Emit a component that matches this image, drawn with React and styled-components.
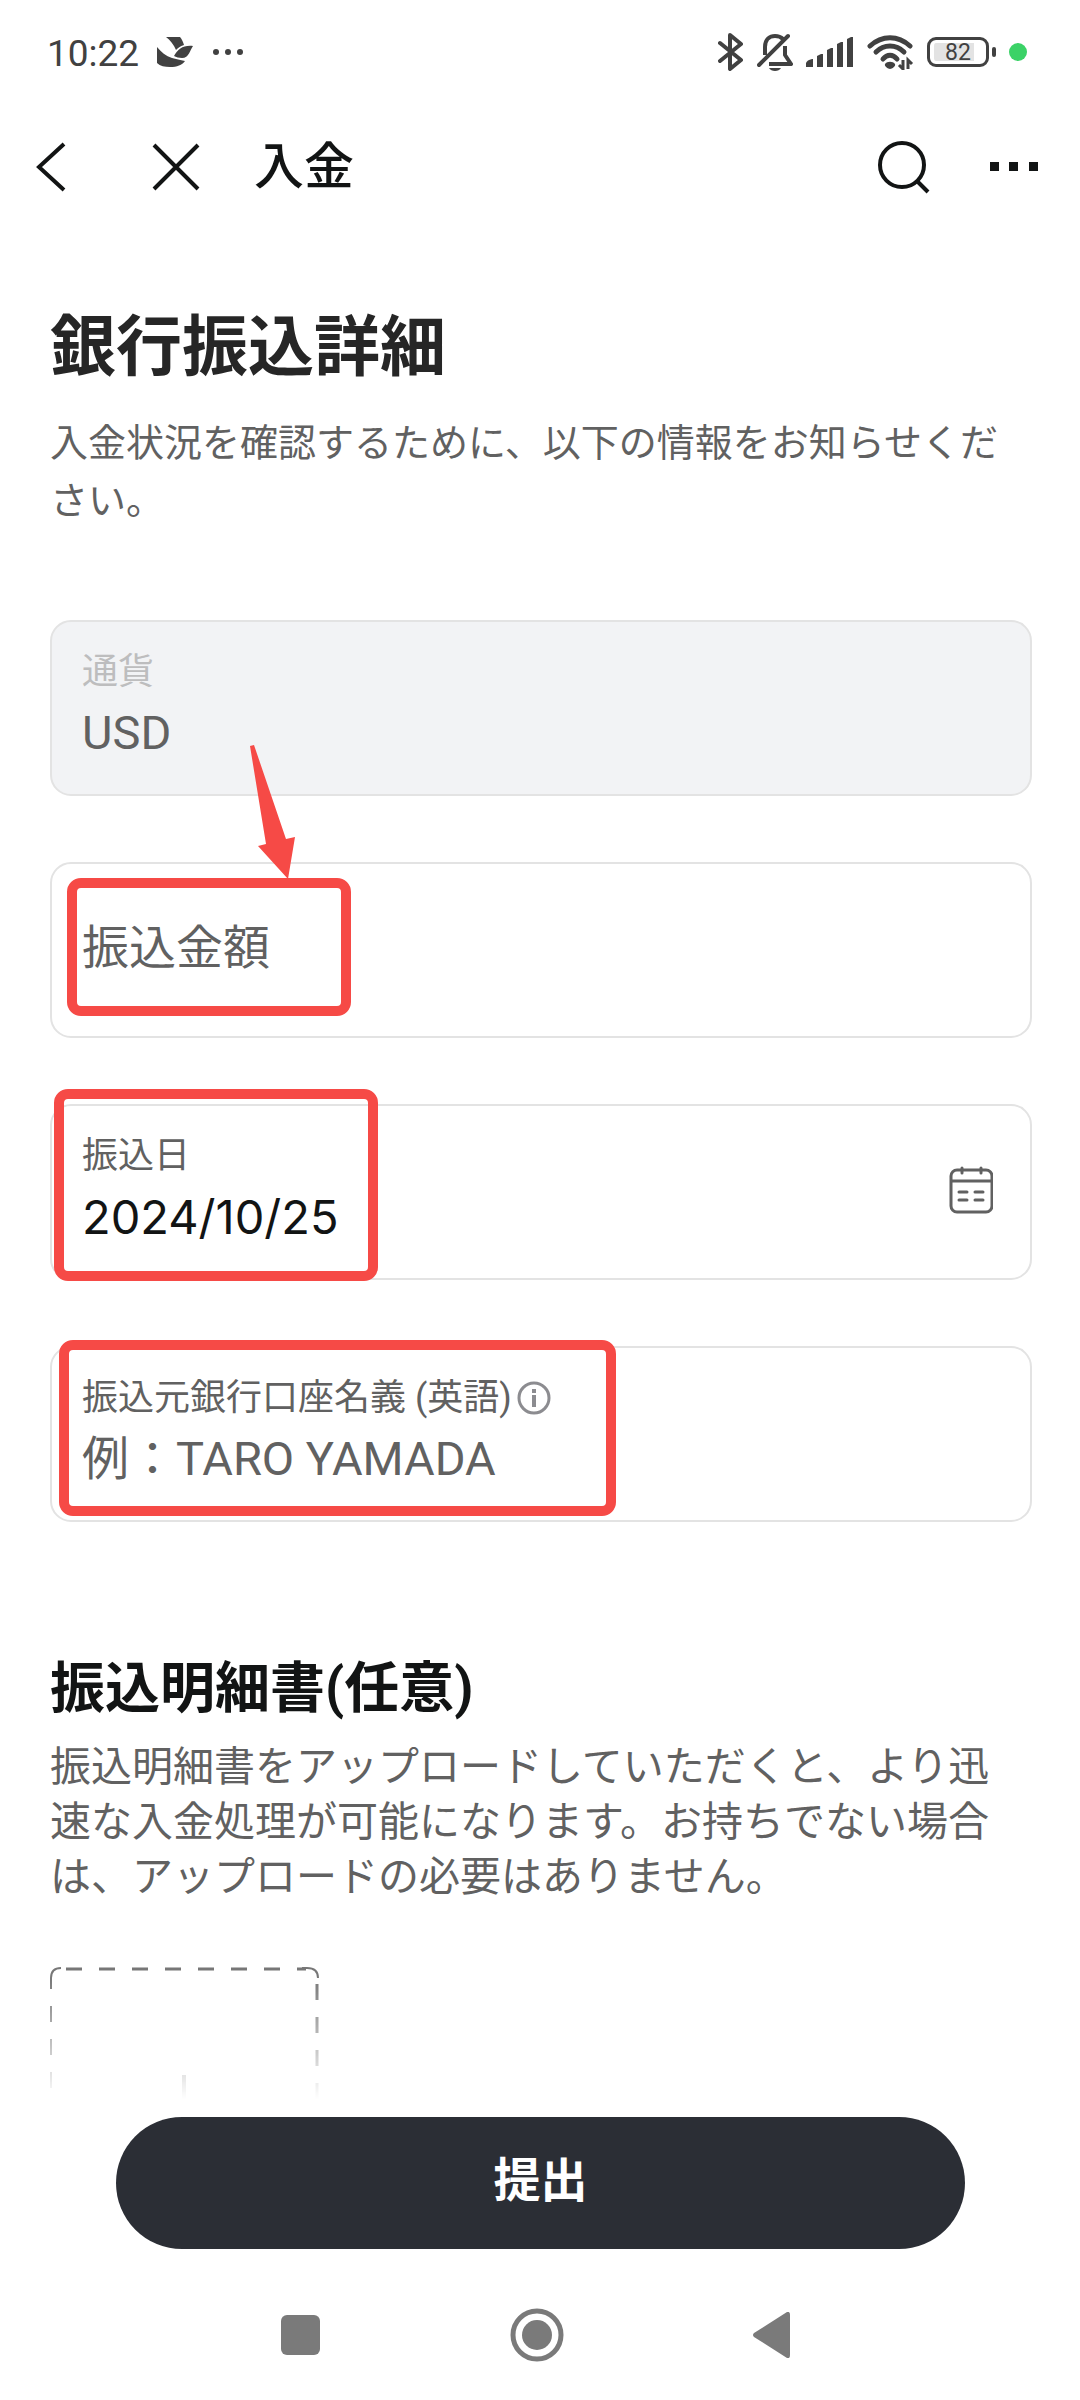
import React, { useState } from 'react';
import styled, { createGlobalStyle } from 'styled-components';

const GlobalStyle = createGlobalStyle`
    * {
        box-sizing: border-box;
    }
    body {
        margin: 0;
        background: #ffffff;
        color: #121414;
        font-family: Roboto, 'Noto Sans CJK JP', sans-serif;
    }
    svg {
        display: block;
        flex: none;
    }
    button {
        border: 0;
        padding: 0;
        background: none;
        color: inherit;
        font: inherit;
        cursor: pointer;
    }
`;

const Page = styled.div`
    display: flex;
    flex-direction: column;
    min-height: 100vh;
    background: #ffffff;
`;

const StatusBar = styled.div`
    display: flex;
    align-items: center;
    justify-content: space-between;
    height: 104px;
    padding: 0 53px 0 47px;
    color: #414141;
    font-size: 37px;
`;

const StatusGroup = styled.div`
    display: flex;
    align-items: center;
    gap: ${props => props.$gap}px;
`;

const Time = styled.span`
    padding-top: 2px;
`;

const Battery = styled.div`
    display: flex;
    align-items: center;
    gap: 3px;
    &::after {
        content: '';
        width: 4px;
        height: 10px;
        border-radius: 2px;
        background: #414141;
    }
`;

const BatteryCell = styled.div`
    width: 62px;
    height: 30px;
    padding: 3px 4px;
    border: 3px solid #414141;
    border-radius: 9px;
    font-size: 23px;
    line-height: 20px;
    text-align: center;
    background: linear-gradient(90deg, #e3e3e3 40px, #ffffff 40px) content-box
        no-repeat;
`;

const ActiveDot = styled.span`
    width: 18px;
    height: 18px;
    border-radius: 50%;
    background: #3bd267;
`;

const AppBar = styled.header`
    display: flex;
    align-items: center;
    height: 126px;
    padding: 0 42px 0 36px;
`;

const IconButton = styled.button`
    display: flex;
    align-items: center;
    justify-content: center;
    margin-right: ${props => props.$space || 0}px;
`;

const AppTitle = styled.h1`
    flex: 1;
    margin: 0;
    font-size: 50px;
    font-weight: 500;
    line-height: 64px;
`;

const Content = styled.main`
    flex: 1;
    padding: 74px 48px 0 50px;
`;

const Title = styled.h2`
    margin: 0 0 22px;
    color: #262626;
    font-size: 66px;
    font-weight: 700;
    line-height: 88px;
`;

const Lead = styled.p`
    margin: 0 0 90px;
    color: #616161;
    font-size: 38px;
    line-height: 58px;
`;

const Fields = styled.div`
    display: flex;
    flex-direction: column;
    gap: 66px;
    margin-bottom: 128px;
`;

const Field = styled.div`
    position: relative;
    display: flex;
    align-items: center;
    height: 176px;
    padding: 0 37px 4px 30px;
    border: 2px solid #e3e3e3;
    border-radius: 21px;
    background: ${props => (props.$disabled ? '#f2f3f5' : '#ffffff')};
`;

const FieldBody = styled.div`
    flex: 1;
    display: flex;
    flex-direction: column;
    gap: 8px;
    min-width: 0;
`;

const Label = styled.label`
    display: flex;
    align-items: center;
    gap: 5px;
    color: ${props => (props.$disabled ? '#bdbdbe' : '#616161')};
    font-size: 36px;
    line-height: 46px;
`;

const Input = styled.input`
    width: 100%;
    height: 60px;
    padding: 0;
    border: 0;
    outline: 0;
    background: none;
    color: #121414;
    font-family: ${props => (props.$numeric ? 'Inter' : 'Roboto')},
        'Noto Sans CJK JP', sans-serif;
    font-size: 47px;
    line-height: 60px;
    &:disabled {
        color: #616161;
    }
    &::placeholder {
        color: #616161;
        opacity: 1;
    }
`;

const Highlight = styled.div`
    position: absolute;
    left: ${props => props.$left}px;
    top: ${props => props.$top}px;
    width: ${props => props.$width}px;
    height: ${props => props.$height}px;
    border: 10px solid #f64a46;
    border-radius: 14px;
    pointer-events: none;
`;

const Arrow = styled.svg`
    position: absolute;
    left: 198px;
    top: -119px;
    pointer-events: none;
`;

const SectionTitle = styled.h3`
    margin: 0 0 14px;
    font-size: 55px;
    font-weight: 700;
    line-height: 76px;
`;

const SectionText = styled.p`
    margin: 0 0 62px;
    padding-right: 24px;
    color: #616161;
    font-size: 41px;
    line-height: 55px;
`;

const UploadButton = styled.button`
    display: block;
    mask-image: linear-gradient(#000 10px, transparent 132px);
`;

const Footer = styled.footer`
    padding: 0 115px 0 116px;
`;

const SubmitButton = styled.button`
    width: 100%;
    height: 132px;
    padding-bottom: 14px;
    border-radius: 66px;
    background: #2b2e35;
    color: #ffffff;
    font-size: 47px;
    font-weight: 700;
`;

const NavBar = styled.nav`
    display: flex;
    align-items: center;
    justify-content: center;
    gap: 189px;
    height: 151px;
    padding: 20px 8px 0 0;
    color: #7a7a7a;
`;

const BirdIcon = () => (
    <svg width='37' height='30' viewBox='0 0 37 30' fill='currentColor'>
        <path d='M9 0h14c2 2 3 5 4 8-4 1-6 3-8 5C17 8 13 3 9 0z' />
        <path d='M0 10c4 5 9 9 15 11 4 1 8 2 13 3-3 4-8 6-15 6-5 0-10-1-13-4z' />
        <path d='M17 19c4-7 9-11 19-10-3 4-4 12-11 12-3 0-6-1-8-2z' />
    </svg>
);

const DotsIcon = () => (
    <svg width='32' height='8' viewBox='0 0 32 8' fill='currentColor'>
        <circle cx='4' cy='4' r='3' />
        <circle cx='16' cy='4' r='3' />
        <circle cx='28' cy='4' r='3' />
    </svg>
);

const BluetoothIcon = () => (
    <svg
        width='26'
        height='40'
        viewBox='0 0 26 40'
        fill='none'
        stroke='currentColor'
        strokeWidth='4'
        strokeLinecap='round'
        strokeLinejoin='round'
    >
        <path d='M2 11l21 17-11 9V3l11 9L2 29' />
    </svg>
);

const MutedBellIcon = () => (
    <svg
        width='36'
        height='40'
        viewBox='0 0 36 40'
        fill='none'
        stroke='currentColor'
        strokeWidth='4'
    >
        <path d='M8 23V15C8 7 13 4 18 4c3 0 6 1 8 3' />
        <path d='M28 14v9l6 9H12' strokeLinejoin='round' />
        <path d='M2 33L31 4' strokeLinecap='round' />
        <path d='M12 36h12c-2 4-10 4-12 0z' fill='currentColor' stroke='none' />
    </svg>
);

const SignalIcon = () => (
    <svg width='48' height='32' viewBox='0 0 48 32' fill='currentColor'>
        <path d='M0 31v-4q1-3 6-4h1v8z' />
        <path d='M11 31V20l4-2h2v13z' />
        <path d='M21 31V14l4-2h2v19z' />
        <path d='M31 31V8l4-2h2v25z' />
        <path d='M41 31V3l4-2h2v30z' />
    </svg>
);

const WifiIcon = () => (
    <svg width='47' height='36' viewBox='0 0 47 36' fill='none' stroke='currentColor'>
        <g strokeWidth='5' strokeLinecap='round'>
            <path d='M3 12C15 1 31 1 43 12' />
            <path d='M9 18c8-8 20-8 28 0' />
            <path d='M16 25c4-5 10-5 14 0' />
        </g>
        <path
            d='M18 30c2-3 8-3 10 0 1 2-3 5-5 5s-6-3-5-5z'
            fill='currentColor'
            stroke='none'
        />
        <path d='M36 26v9l-4-4M41 35v-9l4 4' strokeWidth='3' />
    </svg>
);

const BackIcon = () => (
    <svg width='32' height='50' viewBox='0 0 32 50' fill='none' stroke='currentColor' strokeWidth='4'>
        <path d='M28 2L3 25l25 23' />
    </svg>
);

const CloseIcon = () => (
    <svg width='48' height='48' viewBox='0 0 48 48' fill='none' stroke='currentColor' strokeWidth='4'>
        <path d='M2 2l44 44M46 2L2 46' />
    </svg>
);

const SearchIcon = () => (
    <svg width='54' height='54' viewBox='0 0 54 54' fill='none' stroke='currentColor' strokeWidth='4'>
        <circle cx='25' cy='25' r='22' />
        <path d='M40 41l11 11' />
    </svg>
);

const MoreIcon = () => (
    <svg width='48' height='10' viewBox='0 0 48 10' fill='currentColor'>
        <path d='M0 0h9v9H0zM19 0h9v9h-9zM39 0h9v9h-9z' />
    </svg>
);

const InfoIcon = () => (
    <svg width='34' height='34' viewBox='0 0 34 34' fill='none' stroke='#8c8c90' strokeWidth='3'>
        <circle cx='17' cy='17' r='15' />
        <path d='M17 14v12M17 8v4' strokeWidth='4' />
    </svg>
);

const CalendarIcon = () => (
    <svg width='44' height='48' viewBox='0 0 44 48' fill='none' stroke='#616161' strokeWidth='3'>
        <rect x='2' y='4' width='41' height='42' rx='6' />
        <path d='M2 15h41' />
        <path
            d='M13 2v5M32 2v5M10 26h8M26 26h8M10 34h8M26 34h8'
            strokeLinecap='round'
        />
    </svg>
);

const UploadFrame = () => (
    <svg width='270' height='140' viewBox='0 0 270 140' fill='none' stroke='#777777'>
        <path d='M1 22V11Q1 1 11 1' strokeWidth='2' />
        <path d='M16 2h240' strokeWidth='3' strokeDasharray='16 17' />
        <path d='M252 1h5q11 0 11 10' strokeWidth='2' />
        <path d='M1 39v100' strokeWidth='2' strokeDasharray='16 17' />
        <path d='M267 17v122' strokeWidth='3' strokeDasharray='16 17' />
        <path d='M134 108v32' strokeWidth='4' />
    </svg>
);

const App = () => {
    const [amount, setAmount] = useState('');
    const [date, setDate] = useState('2024/10/25');
    const [holder, setHolder] = useState('');

    return (
        <Page>
            <GlobalStyle />
            <StatusBar>
                <StatusGroup $gap={18}>
                    <Time>10:22</Time>
                    <BirdIcon />
                    <DotsIcon />
                </StatusGroup>
                <StatusGroup $gap={13}>
                    <BluetoothIcon />
                    <MutedBellIcon />
                    <SignalIcon />
                    <WifiIcon />
                    <Battery>
                        <BatteryCell>82</BatteryCell>
                    </Battery>
                    <ActiveDot />
                </StatusGroup>
            </StatusBar>

            <AppBar>
                <IconButton $space={84} aria-label='戻る'>
                    <BackIcon />
                </IconButton>
                <IconButton $space={54} aria-label='閉じる'>
                    <CloseIcon />
                </IconButton>
                <AppTitle>入金</AppTitle>
                <IconButton $space={59} aria-label='検索'>
                    <SearchIcon />
                </IconButton>
                <IconButton aria-label='メニュー'>
                    <MoreIcon />
                </IconButton>
            </AppBar>

            <Content>
                <Title>銀行振込詳細</Title>
                <Lead>
                    入金状況を確認するために、以下の情報をお知らせください。
                </Lead>

                <Fields>
                    <Field $disabled>
                        <FieldBody>
                            <Label htmlFor='currency' $disabled>
                                通貨
                            </Label>
                            <Input id='currency' value='USD' disabled readOnly />
                        </FieldBody>
                    </Field>
                    <Field>
                        <FieldBody>
                            <Input
                                aria-label='振込金額'
                                placeholder='振込金額'
                                value={amount}
                                onChange={e => setAmount(e.target.value)}
                            />
                        </FieldBody>
                        <Highlight $left={15} $top={14} $width={284} $height={138} />
                        <Arrow width='46' height='136' viewBox='0 0 46 136'>
                            <path
                                d='M0 1l4-1 32 94 9-2-7 42L8 101l8-2z'
                                fill='#f64a46'
                            />
                        </Arrow>
                    </Field>
                    <Field>
                        <FieldBody>
                            <Label htmlFor='date'>振込日</Label>
                            <Input
                                id='date'
                                $numeric
                                value={date}
                                onChange={e => setDate(e.target.value)}
                            />
                        </FieldBody>
                        <IconButton aria-label='カレンダー'>
                            <CalendarIcon />
                        </IconButton>
                        <Highlight $left={2} $top={-17} $width={324} $height={192} />
                    </Field>
                    <Field>
                        <FieldBody>
                            <Label htmlFor='holder'>
                                振込元銀行口座名義 (英語)
                                <InfoIcon />
                            </Label>
                            <Input
                                id='holder'
                                placeholder='例：TARO YAMADA'
                                value={holder}
                                onChange={e => setHolder(e.target.value)}
                            />
                        </FieldBody>
                        <Highlight $left={7} $top={-8} $width={557} $height={176} />
                    </Field>
                </Fields>

                <SectionTitle>振込明細書(任意)</SectionTitle>
                <SectionText>
                    振込明細書をアップロードしていただくと、より迅速な入金処理が可能になります。お持ちでない場合は、アップロードの必要はありません。
                </SectionText>
                <UploadButton aria-label='アップロード'>
                    <UploadFrame />
                </UploadButton>
            </Content>

            <Footer>
                <SubmitButton>提出</SubmitButton>
            </Footer>
            <NavBar>
                <IconButton aria-label='アプリ履歴'>
                    <svg width='40' height='40' viewBox='0 0 40 40' fill='currentColor'>
                        <rect width='39' height='40' rx='6' />
                    </svg>
                </IconButton>
                <IconButton aria-label='ホーム'>
                    <svg width='54' height='54' viewBox='0 0 54 54'>
                        <circle cx='27' cy='27' r='24' fill='none' stroke='currentColor' strokeWidth='5' />
                        <circle cx='27' cy='27' r='15' fill='currentColor' />
                    </svg>
                </IconButton>
                <IconButton aria-label='戻る'>
                    <svg width='38' height='46' viewBox='0 0 38 46' fill='currentColor'>
                        <path d='M1 21L34 0q3-1 3 3v40q0 4-3 3L1 25q-2-2 0-4z' />
                    </svg>
                </IconButton>
            </NavBar>
        </Page>
    );
};

export default App;
